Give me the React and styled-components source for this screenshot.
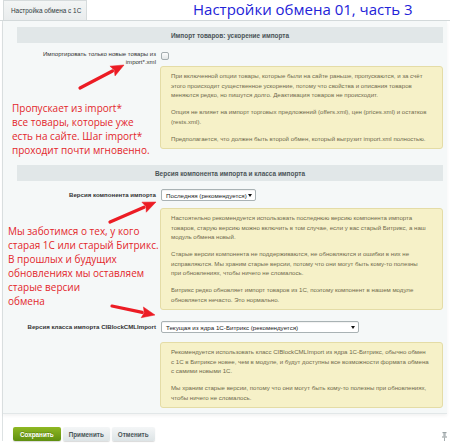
import React from 'react';
import styled, { createGlobalStyle } from 'styled-components';

const GlobalStyle = createGlobalStyle`
  html, body { margin: 0; padding: 0; background: #fff; }
  body { font-family: "Liberation Sans", Arial, sans-serif; }
`;

const Page = styled.div`
  position: relative;
  width: 450px;
  height: 447px;
  overflow: hidden;
  background: #fff;
`;

const TopBar = styled.div`
  display: flex;
  align-items: stretch;
  height: 20px;
  padding-left: 3px;
  border-bottom: 1px solid #d3d9da;
`;

const Tab = styled.div`
  display: flex;
  align-items: center;
  padding: 0 8px 0 7px;
  width: 84px;
  box-sizing: border-box;
  background: linear-gradient(#f3f5f5, #e9eced);
  border: 1px solid #d6dbdc;
  border-bottom: none;
  font-size: 6.4px;
  color: #2f3a3d;
  white-space: nowrap;
`;

const Title = styled.div`
  margin-left: 106px;
  margin-top: -1px;
  font-family: "Open Sans", "Liberation Sans", sans-serif;
  font-size: 15px;
  line-height: 20px;
  color: #2323d8;
  white-space: nowrap;
`;

const Frame = styled.div`
  margin-left: 2px;
  border-left: 1px solid #dde2e3;
`;

const Panel = styled.div`
  background: #f5f8f8;
  margin-right: 3px;
  padding: 6px 4px 5px 14px;
  border-bottom: 1px solid #e2e7e8;
  box-shadow: 0 2px 3px rgba(0, 0, 0, 0.05);
`;

const SectionHead = styled.div`
  height: 16px;
  margin-top: ${p => p.$top || 0}px;
  background: #e1e7e8;
  font-size: 6.45px;
  font-weight: bold;
  color: #4a5457;
  display: flex;
  align-items: center;
  justify-content: center;
`;

const Row = styled.div`
  display: grid;
  grid-template-columns: 143px 1fr;
  margin-top: ${p => p.$top || 0}px;
  align-items: start;
`;

const Label = styled.div`
  text-align: right;
  padding-right: 4px;
  font-size: ${p => (p.$bold ? 6.1 : 6.05)}px;
  line-height: ${p => (p.$bold ? 8 : 7.5)}px;
  color: #333;
  font-weight: ${p => (p.$bold ? 'bold' : 'normal')};
  padding-top: ${p => p.$pad || 0}px;
  white-space: nowrap;
`;

const Check = styled.span`
  display: block;
  width: 6px;
  height: 6px;
  margin-top: 2px;
  margin-left: 1px;
  border: 1px solid #a4adb0;
  border-radius: 2px;
  background: linear-gradient(#fdfdfd, #e3e7e8);
`;

const Select = styled.div`
  display: flex;
  align-items: center;
  justify-content: space-between;
  box-sizing: border-box;
  width: ${p => p.$w}px;
  height: 12px;
  margin-left: 1px;
  padding: 0 3px 0 4px;
  background: #fff;
  border: 1px solid #a9b2b4;
  border-radius: 2px;
  box-shadow: inset 0 1px 1px rgba(0, 0, 0, 0.06);
  font-size: 6.2px;
  color: #222;
  white-space: nowrap;
  &::after {
    content: '';
    border-left: 2px solid transparent;
    border-right: 2px solid transparent;
    border-top: 3px solid #111;
  }
`;

const Note = styled.div`
  height: 0;
  margin-left: ${p => p.$shift}px;
  margin-top: ${p => p.$top}px;
  font-family: "Open Sans", "Liberation Sans", sans-serif;
  font-size: 10px;
  line-height: 14px;
  color: #e3262b;
  white-space: nowrap;
`;

const Hint = styled.div`
  grid-column: 2;
  background: #f6f1c8;
  border: 1px solid #e4dca6;
  border-radius: 3px;
  padding: 4px 10px 5px 10px;
  font-size: 6.1px;
  line-height: 9.5px;
  color: #6f6a4c;
  white-space: nowrap;
  p { margin: 0; }
  p + p { margin-top: 7.5px; }
`;

const Footer = styled.div`
  display: flex;
  align-items: center;
  gap: 2px;
  padding: 13px 0 0 10px;
  position: relative;
`;

const Button = styled.div`
  height: 14px;
  padding: 0 ${p => p.$px}px;
  display: flex;
  align-items: center;
  border-radius: 2px;
  font-size: 6.3px;
  font-weight: bold;
  color: ${p => (p.$primary ? '#fff' : '#4a5659')};
  background: ${p =>
    p.$primary
      ? 'linear-gradient(#8fb823, #5f8f10)'
      : 'linear-gradient(#f4f6f7, #dde4e6)'};
  box-shadow: 0 1px 1px rgba(0, 0, 0, 0.15);
  text-shadow: ${p => (p.$primary ? '0 -1px 0 rgba(0,0,0,0.2)' : 'none')};
`;

const Pin = styled.svg`
  position: absolute;
  right: 3px;
  top: 18px;
`;

const Arrows = styled.svg`
  position: absolute;
  left: 0;
  top: 0;
  pointer-events: none;
`;

const Arrow = ({ x1, y1, x2, y2 }) => {
  const a = Math.atan2(y2 - y1, x2 - x1);
  const len = 13;
  const half = 5.5;
  const bx = x2 - len * Math.cos(a);
  const by = y2 - len * Math.sin(a);
  const px = -Math.sin(a) * half;
  const py = Math.cos(a) * half;
  return (
    <g fill="#ec1c24" stroke="#ec1c24">
      <line x1={x1} y1={y1} x2={bx} y2={by} strokeWidth="3.2" strokeLinecap="round" />
      <polygon
        strokeWidth="0.5"
        points={`${x2},${y2} ${bx + px},${by + py} ${bx + 2 * Math.cos(a)},${by + 2 * Math.sin(a)} ${bx - px},${by - py}`}
      />
    </g>
  );
};

export default function App() {
  return (
    <Page>
      <GlobalStyle />
      <TopBar>
        <Tab>Настройка обмена с 1С</Tab>
        <Title>Настройки обмена 01, часть 3</Title>
      </TopBar>
      <Frame>
        <Panel>
          <SectionHead>Импорт товаров: ускорение импорта</SectionHead>
          <Row $top={7}>
            <Label $pad={1}>
              Импортировать только новые товары из
              <br />
              import*.xml
            </Label>
            <Check />
          </Row>
          <Row>
            <Note $shift={-5} $top={35}>
              Пропускает из import*
              <br />
              все товары, которые уже
              <br />
              есть на сайте. Шаг import*
              <br />
              проходит почти мгновенно.
            </Note>
            <Hint>
              <p>
                При включенной опции товары, которые были на сайте раньше, пропускаются, и за счёт
                <br />
                этого происходит существенное ускорение, потому что свойства и описания товаров
                <br />
                меняются редко, но пишутся долго. Деактивация товаров не происходит.
              </p>
              <p>
                Опция не влияет на импорт торговых предложений (offers.xml), цен (prices.xml) и остатков
                <br />
                (rests.xml).
              </p>
              <p>Предполагается, что должен быть второй обмен, который выгрузит import.xml полностью.</p>
            </Hint>
          </Row>

          <SectionHead $top={16}>Версия компонента импорта и класса импорта</SectionHead>
          <Row $top={8}>
            <Label $bold $pad={2}>Версия компонента импорта</Label>
            <Select $w={95}>Последняя (рекомендуется)</Select>
          </Row>
          <Row $top={7}>
            <Note $shift={-9} $top={16}>
              Мы заботимся о тех, у кого
              <br />
              старая 1С или старый Битрикс.
              <br />
              В прошлых и будущих
              <br />
              обновлениях мы оставляем
              <br />
              старые версии
              <br />
              обмена
            </Note>
            <Hint>
              <p>
                Настоятельно рекомендуется использовать последнюю версию компонента импорта
                <br />
                товаров, старую версию можно включить в том случае, если у вас старый Битрикс, а наш
                <br />
                модуль обмена новый.
              </p>
              <p>
                Старые версии компонента не поддерживаются, не обновляются и ошибки в них не
                <br />
                исправляются. Мы храним старые версии, потому что они могут быть кому-то полезны
                <br />
                при обновлениях, чтобы ничего не сломалось.
              </p>
              <p>
                Битрикс редко обновляет импорт товаров из 1С, поэтому компонент в нашем модуле
                <br />
                обновляется нечасто. Это нормально.
              </p>
            </Hint>
          </Row>
          <Row $top={11}>
            <Label $bold $pad={2}>Версия класса импорта CIBlockCMLImport</Label>
            <Select $w={198}>Текущая из ядра 1С-Битрикс (рекомендуется)</Select>
          </Row>
          <Row $top={9}>
            <Hint>
              <p>
                Рекомендуется использовать класс CIBlockCMLImport из ядра 1С-Битрикс, обычно обмен
                <br />
                с 1С в Битриксе новее, чем в модуле, и будут доступны все возможности формата обмена
                <br />
                с самими новыми 1С.
              </p>
              <p>
                Мы храним старые версии, потому что они могут быть кому-то полезны при обновлениях,
                <br />
                чтобы ничего не сломалось.
              </p>
            </Hint>
          </Row>
        </Panel>
        <Footer>
          <Button $primary $px={7}>Сохранить</Button>
          <Button $px={6}>Применить</Button>
          <Button $px={6}>Отменить</Button>
          <Pin width="5" height="9" viewBox="0 0 5 9">
            <rect x="0.5" y="0" width="4" height="1.2" fill="#9aa3a5" />
            <rect x="1.3" y="1" width="2.4" height="3.5" fill="#b3babc" />
            <rect x="0" y="4.5" width="5" height="1" fill="#8f989a" />
            <rect x="2.1" y="5.5" width="0.8" height="3.5" fill="#8f989a" />
          </Pin>
        </Footer>
      </Frame>
      <Arrows width="450" height="447">
        <Arrow x1={80} y1={88} x2={124} y2={65} />
        <Arrow x1={110} y1={222} x2={156} y2={202} />
        <Arrow x1={112} y1={306} x2={155} y2={315} />
      </Arrows>
    </Page>
  );
}
